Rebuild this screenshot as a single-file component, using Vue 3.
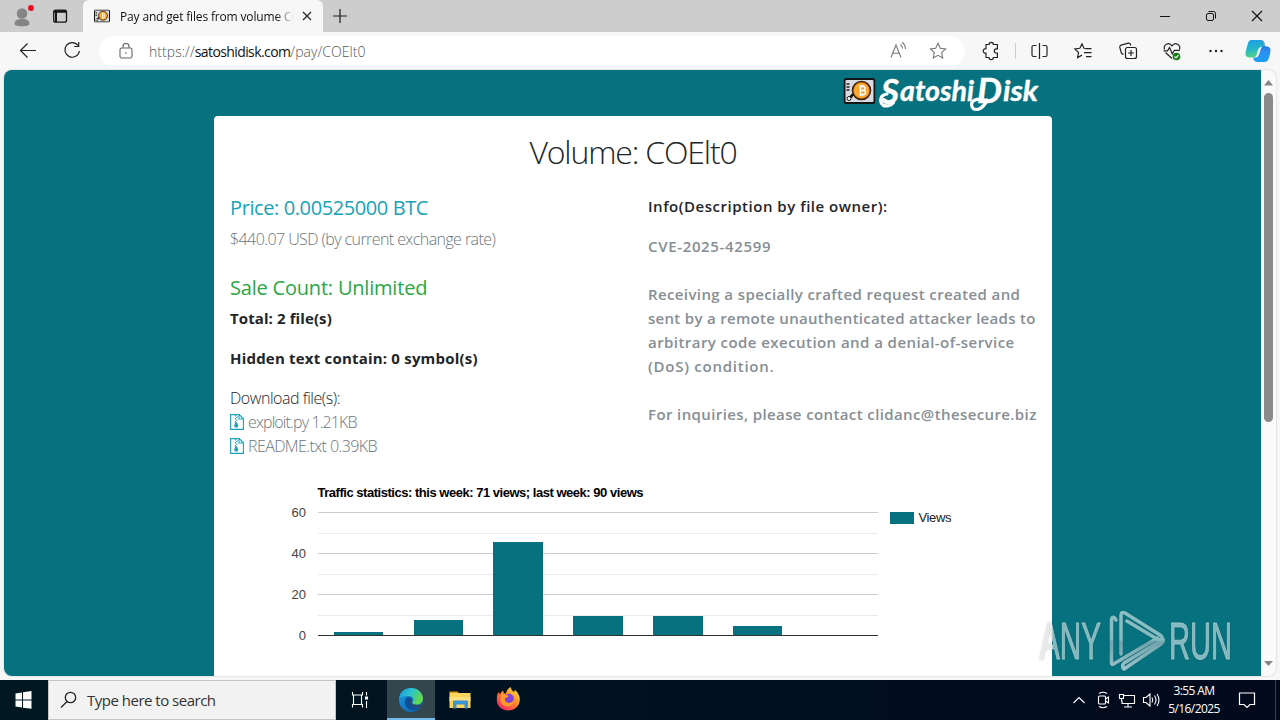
<template>
  <div class="desktop">
    <header class="tabstrip">
      <svg class="profile" viewBox="0 0 83 32">
        <circle cx="22" cy="13.5" r="5.3" fill="#858585" />
        <path d="M14.5 24c0-4 3-5 7.500-5s7.500 1 7.500 5c0 3-15 3-15 0z" fill="#858585" />
        <circle cx="31" cy="8" r="3" fill="#e81123" />
        <rect x="53.700" y="10.200" width="12.800" height="12" rx="2" fill="none" stroke="#161616" stroke-width="1.300" />
        <path d="M54 11.500h12.500" stroke="#161616" stroke-width="2.500" />
        <path d="M56 12v10" stroke="#161616" stroke-width="2" />
      </svg>
      <div class="tab">
        <svg class="favicon" viewBox="0 0 32 26"><use href="#disk" /></svg>
        <div class="tab-title">Pay and get files from volume CO</div>
        <svg class="tab-close" viewBox="0 0 10 10"><path d="M1 1l8 8M9 1l-8 8" stroke="#222" stroke-width="1.200" /></svg>
      </div>
      <svg class="new-tab" viewBox="0 0 14 14"><path d="M7 0v14M0 7h14" stroke="#1a1a1a" stroke-width="1.200" /></svg>
      <svg class="window-controls" viewBox="0 0 138 32" fill="none" stroke="#111" stroke-width="1">
        <path d="M18 16.500h10" />
        <rect x="64.500" y="13.500" width="7" height="7" rx="1.500" />
        <path d="M66.500 11.500h5q2 0 2 2v5" />
        <path d="M110 11l10 10M120 11l-10 10" stroke-width="1.200" />
      </svg>
    </header>

    <nav class="toolbar">
      <svg class="nav-icons" viewBox="0 0 99 38" fill="none" stroke="#222" stroke-width="1.200">
        <path d="M36 18.500H20.500M27.500 11.500l-7 7 7 7" />
        <path d="M78 13.500a7.300 7.300 0 1 0 1.400 5.500M78.700 10v4.500h-4.500" />
      </svg>
      <div class="address">
        <svg class="lock" viewBox="0 0 14 16" fill="none" stroke="#666" stroke-width="1.100">
          <rect x="1" y="5" width="12" height="10" rx="1.800" />
          <path d="M4 5V3.500a3 3 0 0 1 6 0V5" />
          <circle cx="7" cy="10" r=".8" fill="#555" stroke="none" />
        </svg>
        <div class="url">https://<b>satoshidisk.com</b>/pay/COElt0</div>
        <svg class="address-tools" viewBox="0 0 80 30" fill="none" stroke="#777" stroke-width="1.100">
          <path d="M13 21.500l5-12.500 5 12.500M14.800 17.300h6.500M22.500 8.500q2 1.500 2 4M24 6.200q3.500 2.500 3.500 6.800" />
          <path d="M60 7.300l2.300 4.900 5.300.7-3.900 3.700 1 5.300-4.700-2.600-4.700 2.600 1-5.300-3.900-3.700 5.300-.7z" />
        </svg>
      </div>
      <div class="tools">
        <svg viewBox="0 0 44 38" fill="none" stroke="#222" stroke-width="1.200">
          <path d="M17 12.500h3a2.200 2.200 0 0 1 4.400 0h4v4.300h-1a2.100 2.100 0 0 0 0 4.200h1v4.500h-4a2.200 2.200 0 0 1-4.400 0h-3v-4.300a2.300 2.300 0 1 1 0-4.500v-4.200z" />
        </svg>
        <div class="divider"></div>
        <svg viewBox="0 0 44 38" fill="none" stroke="#222" stroke-width="1.200">
          <path d="M22.500 11v16M19.500 13.500h-3q-1.500 0-1.500 1.500v8q0 1.500 1.500 1.500h3M25.500 13.500h3q1.500 0 1.500 1.500v8q0 1.500-1.500 1.500h-3" />
        </svg>
        <svg viewBox="0 0 44 38" fill="none" stroke="#222" stroke-width="1.200">
          <path d="M25.500 16.500l-2.500-.2-2-4.500-2.200 4.500-4.900.7 3.600 3.500-.9 5 4.400-2.400M24.500 16.700h6M23 20.700h7.500M25 24.700h5.500" />
        </svg>
        <svg viewBox="0 0 44 38" fill="none" stroke="#222" stroke-width="1.200">
          <rect x="20.500" y="15.500" width="11" height="11" rx="2" />
          <path d="M26 18v6M23 21h6M18.500 22.500l-1.200-.6q-1-.5-1.300-2l-1.200-4.500q-.3-1.700 1.200-2.300l7.500-1.900q1.500-.2 2 1.300l.2 1" />
        </svg>
        <svg viewBox="0 0 44 38" fill="none" stroke="#222" stroke-width="1.200">
          <path d="M15.500 17.500c-1.500-5 4.500-8 7.500-3.500 3-4.500 9-1.500 7.500 3.500M16.500 20.500l6.500 6M14.500 18.800h4l2-3.300 2.800 6.500 2-3.700h5.500" />
          <circle cx="27.500" cy="24.500" r="3.800" fill="#107c10" stroke="none" />
          <path d="M25.500 24.500l1.500 1.500 2.500-2.800" stroke="#fff" />
        </svg>
        <svg viewBox="0 0 44 38" fill="#222">
          <circle cx="17.500" cy="19" r="1.200" /><circle cx="23" cy="19" r="1.200" /><circle cx="28.500" cy="19" r="1.200" />
        </svg>
        <svg class="copilot" viewBox="0 0 42 38">
          <defs>
            <linearGradient id="coA" x1="0" y1="0" x2="0.200" y2="1"><stop offset="0" stop-color="#1a9be8" /><stop offset=".55" stop-color="#25b6c9" /><stop offset="1" stop-color="#50d184" /></linearGradient>
            <linearGradient id="coB" x1="0" y1="0" x2="0" y2="1"><stop offset="0" stop-color="#1d4fc4" /><stop offset=".5" stop-color="#2d8ff0" /><stop offset="1" stop-color="#1f9ef5" /></linearGradient>
          </defs>
          <path d="M14 8h9q3 0 4 3l1 4h-4q-2 0-3 3l-1.500 5q-1 2.500-3.500 2.500h-3q-4 0-4.500-3 0-3 2-9.500 1.200-5 3.500-5z" fill="url(#coA)" />
          <path d="M22 8h1.500q3 0 4 3l1 3.500h1q4 0 4 3.500 0 4-2 9-1 3-4 3h-7q-3.500 0-4.500-4.500h2.500q2.500 0 3.500-3l2-6q1-2.500 3.500-2.500h.5l-1-3q-.8-3-5-3z" fill="url(#coB)" />
        </svg>
      </div>
    </nav>

    <main class="viewport">
      <div class="page">
        <svg class="brand" viewBox="840 70 212 46">
          <defs>
            <symbol id="disk" viewBox="0 0 32 26">
              <rect x="1" y="1" width="30" height="24" rx="2" fill="#d9dbe2" stroke="#151515" stroke-width="2" />
              <path d="M3 6h3M3 9h3M3 12h3" stroke="#222" stroke-width="1.600" />
              <circle cx="18" cy="12.500" r="9" fill="#f7931a" stroke="#3a2208" stroke-width="1.500" />
              <circle cx="18" cy="12.500" r="6.300" fill="#f9a72c" stroke="#ffc45a" stroke-width=".8" />
              <path d="M16 8.500h3.500q2 0 2 2t-2 2H16m3.500 0q2.500 0 2.500 2t-2.500 2H16M17 7v11M19.300 7v1.500M19.300 16.500V18" fill="none" stroke="#fff" stroke-width="1.400" />
              <path d="M5 21l5-5" stroke="#151515" stroke-width="2.500" />
              <circle cx="5.500" cy="20.500" r="2" fill="#fff" stroke="#151515" />
            </symbol>
          </defs>
          <use href="#disk" x="843.500" y="78" width="32" height="26" />
          <g class="brand-name">
            <text x="881" y="104" font-size="34" textLength="18" lengthAdjust="spacingAndGlyphs">S</text>
            <text x="900" y="101" font-size="28" textLength="74" lengthAdjust="spacingAndGlyphs">atoshi</text>
            <text x="977" y="103" font-size="34" textLength="25" lengthAdjust="spacingAndGlyphs">D</text>
            <text x="1003" y="101" font-size="28" textLength="35" lengthAdjust="spacingAndGlyphs">isk</text>
          </g>
          <path d="M887 94q-6.500 1-6.500 6.500 1 7 8.500 5 3-1 4.500-3M984 99.500q-12-1.500-12.500 5 .5 6.500 7.500 4.500 5-2 8-9" class="brand-swash" />
        </svg>

        <section class="card">
          <h2>Volume: COElt0</h2>
          <div class="columns">
            <div class="column">
              <h5 class="price">Price: 0.00525000 BTC</h5>
              <p class="rate">$440.07 USD (by current exchange rate)</p>
              <h5 class="sales">Sale Count: Unlimited</h5>
              <p class="total">Total: 2 file(s)</p>
              <p class="hidden-text">Hidden text contain: 0 symbol(s)</p>
              <p class="download">Download file(s):</p>
              <div v-for="file in files" :key="file.name" class="file">
                <svg viewBox="0 0 14 16" fill="none" stroke="#17a2b8" stroke-width="1.100">
                  <path d="M.6.600h8.600l4.200 4.200v10.600H.6zM9 .6v4.400h4.400M5.500 1v1.500M7 2.500V4M5.500 4v1.500M7 5.500V7M5.500 7v2" />
                  <path d="M5.200 8.500h2l1 3.500q0 1.500-2 1.500t-2-1.500z" fill="#17a2b8" stroke="none" />
                </svg>
                <span :class="file.kind">{{ file.name }} {{ file.size }}</span>
              </div>
            </div>
            <div class="column info">
              <p class="info-title">Info(Description by file owner):</p>
              <div v-for="(line, i) in description" :key="i" class="line">
                <span :style="{ letterSpacing: line.spacing + 'px' }">{{ line.text }}</span>
              </div>
            </div>
          </div>

          <svg class="chart" viewBox="230 475 806 201" shape-rendering="crispEdges">
            <text x="317.500" y="497" class="chart-title" textLength="326">Traffic statistics: this week: 71 views; last week: 90 views</text>
            <rect v-for="n in 6" :key="n" x="318" :y="yPos(n * 10)" width="560" height="1" :fill="n % 2 ? '#ebebeb' : '#ccc'" />
            <text v-for="n in [0, 20, 40, 60]" :key="'t' + n" x="306" :y="yPos(n) + 5" class="tick">{{ n }}</text>
            <rect
              v-for="(views, i) in days"
              :key="'b' + i"
              :x="333.800 + i * 79.800"
              :y="yPos(views)"
              width="49.500"
              :height="635 - yPos(views)"
              fill="#07727f"
            />
            <rect x="318" y="635" width="560" height="1" fill="#333" />
            <rect x="890" y="512" width="24" height="12" fill="#07727f" />
            <text x="918.500" y="522" class="legend" textLength="33">Views</text>
          </svg>
        </section>
      </div>
      <div class="scrollbar">
        <svg viewBox="0 0 15 606">
          <path d="M3 15.500L7.500 10l4.500 5.500z" fill="#858585" />
          <rect x="3" y="23" width="9" height="329" rx="4.500" fill="#8a8a8a" />
          <path d="M3 591l4.500 5 4.500-5z" fill="#858585" />
        </svg>
      </div>
    </main>

    <svg class="watermark" viewBox="1030 600 210 76">
      <defs>
        <linearGradient id="wm" gradientUnits="userSpaceOnUse" x1="0" y1="611" x2="0" y2="671">
          <stop offset="0" stop-color="#b5dde0" stop-opacity=".75" />
          <stop offset=".48" stop-color="#a9d8dc" stop-opacity=".75" />
          <stop offset=".52" stop-color="#a5c5cf" stop-opacity=".65" />
          <stop offset="1" stop-color="#c0dce2" stop-opacity=".8" />
        </linearGradient>
        <linearGradient id="wmText" gradientUnits="userSpaceOnUse" x1="1040" y1="0" x2="1232" y2="0">
          <stop offset="0" stop-color="#eee" stop-opacity=".85" />
          <stop offset=".06" stop-color="#eee" stop-opacity=".85" />
          <stop offset=".07" stop-color="#a9d3d8" stop-opacity=".75" />
          <stop offset="1" stop-color="#a9d3d8" stop-opacity=".75" />
        </linearGradient>
      </defs>
      <text x="1040" y="659" textLength="61" lengthAdjust="spacingAndGlyphs">ANY</text>
      <text x="1169" y="659" textLength="63" lengthAdjust="spacingAndGlyphs">RUN</text>
      <path d="M1116 620q-3-5-4.500-1v44q0 2 2 1l44-26M1121 654v-38q0-5 4-3l35 22q4 3 0 5l-3-1-30-18M1160 641l-36 22q-2 2-1 5l1 1 37-25q4-3 1-6" />
    </svg>

    <footer class="taskbar">
      <svg class="start" viewBox="0 0 48 40" fill="#fff">
        <path d="M15.500 13.500l6.500-1v7h-6.500zM23 12.300l8.500-1.200v8.400H23zM15.500 20.500H22v7l-6.500-1zM23 20.500h8.500v8.300L23 27.700z" />
      </svg>
      <div class="search">
        <svg viewBox="0 0 18 18" fill="none" stroke="#222" stroke-width="1.300"><circle cx="10.500" cy="6.500" r="5.200" /><path d="M7 10.500L1 16.500" /></svg>
        <span>Type here to search</span>
      </div>
      <svg class="slot" viewBox="0 0 48 40" fill="none" stroke="#fff" stroke-width="1.100">
        <path d="M16.500 12v3h10v-3M16.500 27.500v-3h10v3M17.500 15v9.500M25.500 15v9.500M30.500 12v3.500M30.500 21v7" />
        <path d="M29.500 17h2v2h-2z" fill="#fff" />
      </svg>
      <div class="edge-app">
        <svg viewBox="0 0 48 38">
          <defs>
            <linearGradient id="edgeTop" x1="0" y1="0" x2="1" y2=".4"><stop offset="0" stop-color="#1a8fd8" /><stop offset=".5" stop-color="#2bc3d2" /><stop offset="1" stop-color="#62d84c" /></linearGradient>
            <linearGradient id="edgeLow" x1="0" y1="0" x2="1" y2="1"><stop offset="0" stop-color="#1b9de2" /><stop offset="1" stop-color="#0c59a4" /></linearGradient>
          </defs>
          <circle cx="24" cy="20" r="12" fill="url(#edgeLow)" />
          <path d="M12.200 18C13 11.500 18 8 24 8c7 0 12 5 12 10.500 0 4-3 6-6.500 6-3 0-4.500-1-4-2.500 2-2.500.5-6-4-6-4 0-8 1-9.300 2z" fill="url(#edgeTop)" />
          <path d="M20 17.500c-4 3.500-2 11 4.500 12.500 5 .8 8-1.500 10-4.500-4 2-9 1-10.500-1.500-1-1.500.5-2 .8-3.500.2-2-2.300-4.500-4.800-3z" fill="#104f96" />
          <path d="M24.500 18.500c1.500 1.500.3 3-.2 4 .7 2 3.700 3.200 8 2.700 1.500-.2 3-1 3.300-2l.5 2q-5 2.500-9 1-4.500-1.700-4-5z" fill="#39464c" />
        </svg>
      </div>
      <svg class="slot" viewBox="0 0 48 40">
        <path d="M13.500 11.500h8l1.500 2h-9.500z" fill="#e09c13" /><path d="M13.500 13h21v15h-21z" fill="#ffd45a" />
        <path d="M13.500 17h21v4h-21z" fill="#ffe07e" />
        <path d="M17 28.500v-7q0-1 1-1h13q1 0 1 1v7h-3.500v-4h-8v4z" fill="#3a94d3" />
      </svg>
      <svg class="slot" viewBox="0 0 48 40">
        <defs>
          <linearGradient id="fox" x1="1" y1="0" x2=".2" y2="1"><stop offset="0" stop-color="#fff04a" /><stop offset=".5" stop-color="#ff8a25" /><stop offset="1" stop-color="#f5206a" /></linearGradient>
        </defs>
        <path d="M14.500 12q1 1 1.500 2.500 1-3 3-4 .2 2.500 2.500 3.500 1-4.500 5-7 .5 3 3.500 5 1-1 .5-2.500Q36 14 35.800 20c-.3 6-5 10.500-11.500 10.500S13 26 12.800 20q-.3-5 1.700-8z" fill="url(#fox)" />
        <circle cx="25" cy="18.500" r="4.800" fill="#8241d8" />
        <path d="M17 14.500q4-1 8 1.500-1.200 1.500-4 2-1 3.500 3.500 5 3.500 0 5.500-3-1 6.500-7 6.500-5.500-.5-6.500-6z" fill="#ff9b28" />
      </svg>
      <svg class="tray" viewBox="1067 680 96 40" fill="none" stroke="#fff" stroke-width="1.100">
        <path d="M1073.500 703l5.500-5.500 5.500 5.500" />
        <rect x="1098.500" y="696" width="7" height="8" rx="1" /><path d="M1105.500 699l3-2v6l-3-2M1099 693.500q4-2.500 8 0M1099 706.500q4 2.500 8 0" />
        <path d="M1124 695.500h10.500v8H1122v-3M1128 703.500v3M1124 707h8M1119.500 694.500h4v4h-4zM1121.500 698.500v3" />
        <path d="M1143.500 697.500h2.500l4-3.500v12l-4-3.500h-2.500zM1152 697.500q1.500 2.500 0 5M1154.500 695.500q3 4.500 0 9M1157 694q4 6 0 12" />
      </svg>
      <div class="clock"><span>3:55 AM</span><span>5/16/2025</span></div>
      <svg class="notify" viewBox="0 0 57 40" fill="none" stroke="#fff" stroke-width="1.200">
        <path d="M16.500 13h15v11.500H27l-3 3-3-3h-4.500z" /><path d="M52.500 0v40" stroke="#35414d" stroke-width="1" />
      </svg>
    </footer>
  </div>
</template>

<script setup>
const files = [
  { name: 'exploit.py', size: '1.21KB', kind: 'script' },
  { name: 'README.txt', size: '0.39KB', kind: 'readme' },
]

const description = [
  { text: 'CVE-2025-42599', spacing: 0.65 },
  { text: '', spacing: 0 },
  { text: 'Receiving a specially crafted request created and', spacing: 0.39 },
  { text: 'sent by a remote unauthenticated attacker leads to', spacing: 0.3 },
  { text: 'arbitrary code execution and a denial-of-service', spacing: 0.44 },
  { text: '(DoS) condition.', spacing: 0.75 },
  { text: '', spacing: 0 },
  { text: 'For inquiries, please contact clidanc@thesecure.biz', spacing: 0.39 },
]

const days = [1.5, 7.5, 45.500, 9.5, 9.5, 4.5]

// 20 views take up 41px on the vertical axis
const yPos = (views) => Math.round(635 - views * 2.05)
</script>

<style>
body {
  margin: 0;
  overflow: hidden;
}
</style>

<style scoped>
.desktop {
  width: 1280px;
  height: 720px;
  display: flex;
  flex-direction: column;
  position: relative;
  background: #f7f7f7;
  font-family: 'Open Sans', 'Noto Sans', sans-serif;
}
svg {
  display: block;
  flex: none;
}
h2,
h5,
p {
  margin: 0;
}
.tabstrip {
  height: 32px;
  display: flex;
  align-items: center;
  background: #cdcdcd;
}
.profile {
  width: 83px;
  height: 32px;
}
.tab {
  width: 240px;
  height: 32px;
  box-sizing: border-box;
  padding: 0 11px;
  display: flex;
  align-items: center;
  background: #f7f7f7;
  border-radius: 6px 6px 0 0;
}
.favicon {
  width: 16px;
  height: 14px;
  margin-right: 10px;
}
.tab-title {
  width: 174px;
  margin-right: 8px;
  white-space: nowrap;
  font-size: 12px;
  letter-spacing: -0.16px;
  color: #111;
  mask-image: linear-gradient(90deg, #000 156px, transparent 174px);
}
.tab-close {
  width: 10px;
  height: 10px;
}
.new-tab {
  width: 14px;
  height: 14px;
  margin-left: 10px;
}
.window-controls {
  width: 138px;
  height: 32px;
  margin-left: auto;
}
.toolbar {
  height: 38px;
  display: flex;
  align-items: center;
}
.nav-icons {
  width: 99px;
  height: 38px;
}
.address {
  width: 866px;
  height: 30px;
  display: flex;
  align-items: center;
  background: #fff;
  border-radius: 15px;
}
.lock {
  width: 14px;
  height: 16px;
  margin: 0 16px 0 20px;
}
.url {
  flex: 1;
  font-size: 14px;
  font-weight: 300;
  letter-spacing: 0.05px;
  color: #555;
}
.url b {
  font-weight: 400;
  letter-spacing: -0.6px;
  color: #111;
}
.address-tools {
  width: 80px;
  height: 30px;
  margin-right: 7px;
}
.tools {
  display: flex;
  align-items: center;
  margin-left: 4px;
}
.tools svg {
  width: 44px;
  height: 38px;
}
.tools .copilot {
  width: 42px;
}
.divider {
  width: 1px;
  height: 16px;
  margin: 0 1px 0 2px;
  background: #ccc;
}
.viewport {
  height: 606px;
  width: 1272px;
  margin-left: 4px;
  display: flex;
  overflow: hidden;
  border-radius: 8px;
  background: #fafafa;
  box-shadow: 0 0 2px #bbb;
}
.page {
  width: 1257px;
  display: flex;
  flex-direction: column;
  background: #07727f;
}
.brand {
  width: 212px;
  height: 46px;
  margin-left: 836px;
}
.brand-name {
  font-family: Lato, sans-serif;
  font-weight: 700;
  font-style: italic;
  fill: #fff;
  stroke: #fff;
  stroke-width: 0.4;
  stroke-linejoin: round;
}
.brand-swash {
  fill: none;
  stroke: #fff;
  stroke-width: 3.2;
  stroke-linecap: round;
}
.card {
  width: 838px;
  height: 560px;
  margin-left: 210px;
  box-sizing: border-box;
  padding: 17px 16px 0;
  background: #fff;
  border-radius: 4px 4px 0 0;
  color: #212529;
}
h2 {
  height: 38px;
  margin-bottom: 25px;
  line-height: 38px;
  font-size: 32px;
  font-weight: 300;
  text-align: center;
  letter-spacing: -1.15px;
}
.columns {
  height: 279px;
  display: flex;
  gap: 30px;
}
.column {
  width: 388px;
  font-size: 16px;
  line-height: 24px;
  white-space: nowrap;
}
h5 {
  font-size: 20px;
  font-weight: 400;
  line-height: 24px;
}
.price {
  margin-bottom: 7px;
  letter-spacing: -0.4px;
  color: #17a2b8;
}
.rate {
  margin-bottom: 25px;
  font-weight: 300;
  letter-spacing: -0.58px;
  color: #6c757d;
}
.sales {
  margin-bottom: 6px;
  letter-spacing: -0.2px;
  color: #28a745;
}
.total,
.hidden-text {
  margin-bottom: 16px;
  font-size: 15px;
  font-weight: 700;
}
.total {
  letter-spacing: 0.1px;
}
.hidden-text {
  letter-spacing: 0.2px;
}
.download {
  font-weight: 300;
  letter-spacing: -0.45px;
}
.file {
  height: 24px;
  display: flex;
  align-items: center;
  gap: 4px;
  font-weight: 300;
  color: #6c757d;
}
.file svg {
  width: 14px;
  height: 16px;
  margin-bottom: 1px;
}
.script {
  letter-spacing: -0.88px;
}
.readme {
  letter-spacing: -0.6px;
}
.info {
  font-size: 15px;
  font-weight: 600;
  color: #868e96;
}
.info-title {
  margin: -2px 0 16px;
  letter-spacing: 0.52px;
  color: #212529;
}
.line {
  height: 24px;
}
.chart {
  width: 806px;
  height: 201px;
  font-family: 'Liberation Sans', Arial, sans-serif;
  font-size: 13px;
}
.chart-title {
  font-weight: 700;
}
.tick {
  text-anchor: end;
  fill: #444;
}
.legend {
  fill: #222;
}
.scrollbar {
  width: 15px;
}
.watermark {
  position: absolute;
  left: 1030px;
  top: 600px;
  width: 210px;
  height: 76px;
  filter: drop-shadow(0 0 1px rgba(60, 60, 60, 0.35));
}
.watermark text {
  font-family: 'Liberation Sans Narrow', 'Liberation Sans', sans-serif;
  font-size: 51px;
  fill: url(#wmText);
  stroke: url(#wmText);
  stroke-width: 0.9;
}
.watermark path {
  fill: none;
  stroke: url(#wm);
  stroke-width: 3.5;
  stroke-linecap: round;
  stroke-linejoin: round;
}
.taskbar {
  height: 40px;
  margin-top: 4px;
  display: flex;
  background: linear-gradient(90deg, #001821, #010f1f 60%, #020a1c);
  color: #fff;
}
.start,
.slot {
  width: 48px;
  height: 40px;
}
.search {
  width: 288px;
  box-sizing: border-box;
  padding-left: 11px;
  display: flex;
  align-items: center;
  gap: 9px;
  background: #f2f2f2;
  border: 1px solid #c4c4c4;
  color: #333;
  font-size: 15px;
  letter-spacing: -0.5px;
}
.search svg {
  width: 18px;
  height: 18px;
}
.edge-app {
  width: 48px;
  height: 38px;
  margin: 0 1px 0 3px;
  background: #33454d;
  border-bottom: 2px solid #76b9ed;
}
.tray {
  width: 96px;
  height: 40px;
  margin-left: auto;
}
.clock {
  width: 62px;
  margin-right: -2px;
  padding: 2px 0;
  display: flex;
  flex-direction: column;
  align-items: center;
  font-size: 12px;
  line-height: 18px;
  letter-spacing: -0.6px;
}
.notify {
  width: 57px;
  height: 40px;
}
</style>
